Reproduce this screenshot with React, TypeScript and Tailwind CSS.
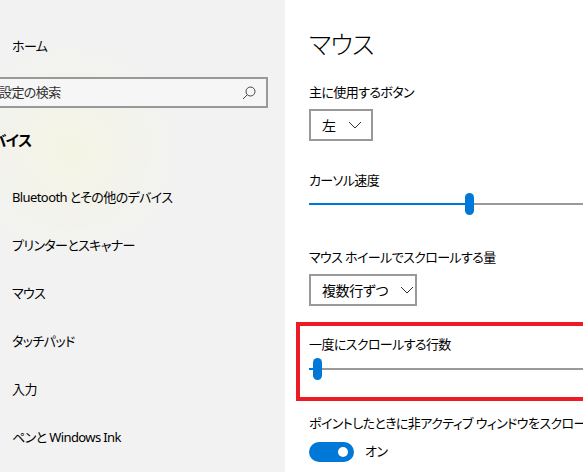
const navItems = ['Bluetooth とその他のデバイス', 'プリンターとスキャナー', 'マウス', 'タッチパッド', '入力', 'ペンと Windows Ink'];

const font = "font-['Noto_Sans','Noto_Sans_CJK_JP',sans-serif] [font-feature-settings:'palt']";

function Chevron() {
  return (
    <svg width="14" height="8" viewBox="0 0 14 8" fill="none">
      <polyline points="1,1 7,7 13,1" stroke="#333" strokeWidth="1" />
    </svg>
  );
}

function Dropdown({ label, width }: { label: string; width: string }) {
  return (
    <div className={`${width} mt-[7px] flex h-[32px] items-center gap-[12px] whitespace-nowrap border-2 border-[#999] pl-[11px] text-[14px] tracking-[-0.4px] text-black`}>
      <span>{label}</span>
      <Chevron />
    </div>
  );
}

function Slider({ value }: { value: number }) {
  return (
    <div className="relative h-[24px]">
      <div className="absolute left-0 right-[-40px] top-[11px] h-[2px] bg-[#999]" />
      <div className="absolute left-0 top-[11px] h-[2px] bg-[#0078d7]" style={{ width: value }} />
      <div className="absolute top-[1px] h-[22px] w-[9px] rounded-full bg-[#0078d7]" style={{ left: value - 4 }} />
    </div>
  );
}

export default function App() {
  return (
    <div className={`flex h-[472px] w-[583px] overflow-hidden bg-white text-black ${font}`}>
      {/* ナビゲーション */}
      <aside className="w-[285px] shrink-0 bg-[#f2f2f2] bg-[radial-gradient(circle_at_70px_150px,#f4f4e4_0px,#f2f2f2_110px)] pt-[36px] text-[13px] tracking-[-0.6px]">
        <div className="h-[20px] pl-[12px] leading-[20px]">ホーム</div>
        <div className="ml-[-20px] mt-[21px] flex h-[31px] w-[288px] items-center justify-between border-2 border-[#999] bg-[#f6f6f6] pl-[17px] pr-[10px] text-[#333]">
          <span>設定の検索</span>
          <svg width="14" height="14" viewBox="0 0 14 14" fill="none">
            <circle cx="8.5" cy="5.5" r="4.5" stroke="#444" strokeWidth="1" />
            <line x1="5.3" y1="8.7" x2="1" y2="13" stroke="#444" strokeWidth="1" />
          </svg>
        </div>
        <div className="ml-[-22px] mt-[20px] h-[24px] text-[15px] font-bold leading-[24px]">デバイス</div>
        <ul className="mt-[22px]">
          {navItems.map((n) => (
            <li key={n} className="flex h-[48px] items-center pl-[12px]">
              {n}
            </li>
          ))}
        </ul>
      </aside>

      {/* マウス設定 */}
      <main className="flex-1 pl-[24px] pt-[26px] text-[13px] tracking-[-0.6px]">
        <h1 className="h-[36px] text-[25px] font-light leading-[36px] tracking-[-1px]">マウス</h1>

        <p className="mt-[20px] h-[20px] leading-[20px]">主に使用するボタン</p>
        <Dropdown label="左" width="w-[64px]" />

        <p className="mt-[29px] h-[20px] leading-[20px]">カーソル速度</p>
        <div className="mt-[2px]">
          <Slider value={160} />
        </div>

        <p className="mt-[31px] h-[20px] leading-[20px]">マウス ホイールでスクロールする量</p>
        <Dropdown label="複数行ずつ" width="w-[108px]" />

        <div className="ml-[-13px] mr-[-40px] mt-[16px] border-4 border-[#ed1c24] pb-[16px] pl-[9px] pt-[8px]">
          <p className="h-[20px] leading-[20px]">一度にスクロールする行数</p>
          <div className="mt-[3px]">
            <Slider value={8} />
          </div>
        </div>

        <p className="mt-[12px] h-[20px] whitespace-nowrap leading-[20px]">
          ポイントしたときに非アクティブ ウィンドウをスクロールする
        </p>
        <div className="mt-[9px] flex items-center gap-[11px]">
          <div className="flex h-[20px] w-[45px] items-center justify-end rounded-full bg-[#0078d7] pr-[6px]">
            <div className="h-[10px] w-[10px] rounded-full bg-white" />
          </div>
          <span>オン</span>
        </div>
      </main>
    </div>
  );
}
